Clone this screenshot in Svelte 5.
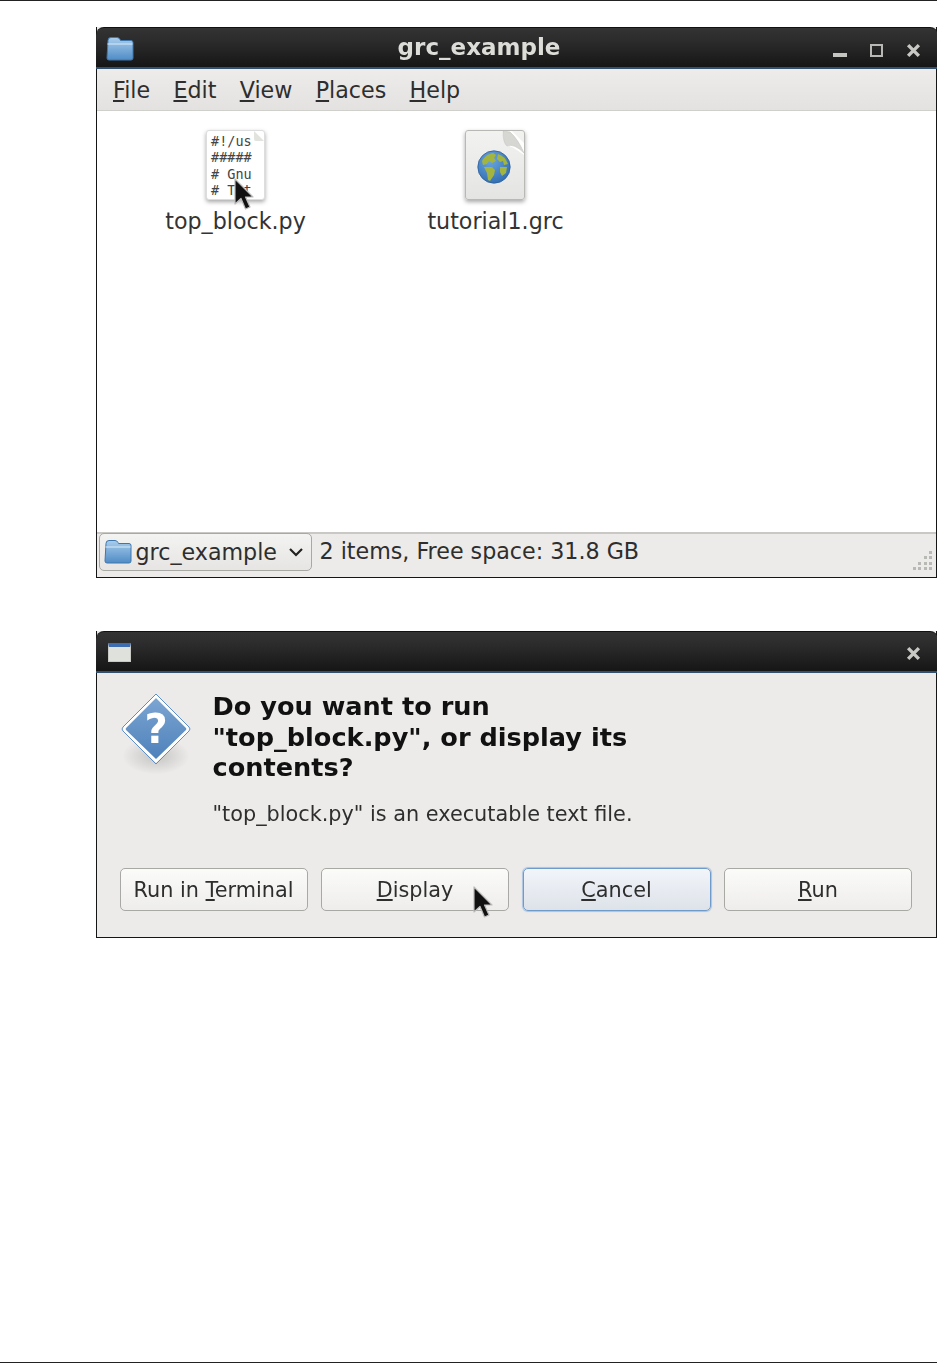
<script>
  const menus = [
    { key: 'F', rest: 'ile' },
    { key: 'E', rest: 'dit' },
    { key: 'V', rest: 'iew' },
    { key: 'P', rest: 'laces' },
    { key: 'H', rest: 'elp' }
  ];

  const scriptLines = ['#!/us', '#####', '# Gnu', '# Tit'];
  const gripRows = [[0,0,0,1],[0,0,1,1],[0,1,1,1],[1,1,1,1]];
</script>

{#snippet folder(w, h)}
  <svg width={w} height={h} viewBox="0 0 28 25" class="folder">
    <defs>
      <linearGradient id="fold" x1="0" y1="0" x2="0" y2="1">
        <stop offset="0" stop-color="#a9cdec" />
        <stop offset="1" stop-color="#4f8cc6" />
      </linearGradient>
    </defs>
    <path d="M2 4.5 Q2 1.5 5 1.5 H11 Q13 1.5 14 3.5 L14.5 4.5 H25 Q27 4.5 27 6.5 V22 Q27 24 25 24 H3 Q1 24 1 22 Z" fill="url(#fold)" stroke="#3f77ad" stroke-width="1" />
    <path d="M1.5 8 H26.5" stroke="#cfe3f5" stroke-width="1.2" />
  </svg>
{/snippet}

{#snippet cursor()}
  <svg width="24" height="34" viewBox="0 0 24 34">
    <path d="M3 1 V26 L9 20.5 L13.5 31 L18 29 L13.5 19 H21 Z" fill="#111" stroke="#bbb" stroke-width="1.2" stroke-linejoin="round" />
  </svg>
{/snippet}

{#snippet closeX(size)}
  <svg width={size} height={size} viewBox="0 0 14 14">
    <path d="M2 2 L12 12 M12 2 L2 12" stroke="#c8c8c4" stroke-width="3.2" />
  </svg>
{/snippet}

<div class="page">
  <div class="rule"></div>

  <section class="window browser">
    <header class="titlebar">
      <span class="title-icon">{@render folder(28, 25)}</span>
      <span class="title">grc_example</span>
      <div class="controls">
        <span class="min"></span>
        <span class="max"></span>
        {@render closeX(15)}
      </div>
    </header>

    <nav class="menubar">
      {#each menus as m}
        <span class="menu"><u>{m.key}</u>{m.rest}</span>
      {/each}
    </nav>

    <div class="files">
      <div class="file">
        <div class="doc script">
          <svg class="ear" width="10" height="10" viewBox="0 0 10 10"><path d="M0 0 L10 10 H2 Q0 10 0 8 Z" fill="#e2e2de" /></svg>
          {#each scriptLines as line}
            <span>{line}</span>
          {/each}
          <span class="pointer">{@render cursor()}</span>
        </div>
        <span class="name">top_block.py</span>
      </div>

      <div class="file">
        <div class="doc grc">
          <svg class="ear" width="22" height="24" viewBox="0 0 22 24"><path d="M0 0 Q2 10 4 14 Q10 15 22 24 V12 L10 0 Z" fill="#fff" /><path d="M1 0 Q1 12 5 15 Q12 12 22 22 Q16 8 8 1 Z" fill="#d6d6d2" stroke="#c4c4c0" stroke-width="0.6" /></svg>
          <svg class="globe" width="34" height="34" viewBox="0 0 34 34">
            <defs>
              <radialGradient id="sea" cx="0.4" cy="0.3" r="0.8">
                <stop offset="0" stop-color="#6ba6de" />
                <stop offset="1" stop-color="#2c68ad" />
              </radialGradient>
            </defs>
            <circle cx="17" cy="17" r="16.2" fill="url(#sea)" stroke="#2f5f9c" stroke-width="0.8" />
            <path d="M5 11 Q9 4 16 3 L19 5 L17 8 L19 11 L15 13 L12 11 L10 14 L6 15 Z" fill="#a3b53e" />
            <path d="M21 4 Q28 6 31 14 L27 15 L26 11 L23 12 L20 9 Z" fill="#a3b53e" />
            <path d="M7 17 L15 17 L18 20 L17 25 L13 31 L11 30 L10 23 Z" fill="#a3b53e" />
            <path d="M23 17 L30 17 L29 23 L25 26 L23 22 Z" fill="#a3b53e" />
          </svg>
        </div>
        <span class="name">tutorial1.grc</span>
      </div>
    </div>

    <footer class="statusbar">
      <div class="path-btn">
        {@render folder(28, 25)}
        <span>grc_example</span>
        <svg width="16" height="10" viewBox="0 0 16 10"><path d="M2 2 L8 8 L14 2" fill="none" stroke="#222" stroke-width="2.2" /></svg>
      </div>
      <span class="status-text">2 items, Free space: 31.8 GB</span>
      <div class="grip">
        {#each gripRows as row}
          {#each row as dot}<i class:on={dot}></i>{/each}
        {/each}
      </div>
    </footer>
  </section>

  <section class="window dialog">
    <header class="titlebar small">
      <span class="app-icon"></span>
      <span class="grow"></span>
      <span class="dialog-close">{@render closeX(15)}</span>
    </header>

    <div class="dialog-body">
      <div class="message">
        <svg class="question" width="72" height="84" viewBox="0 0 72 84">
          <defs>
            <linearGradient id="diamond" x1="0" y1="0" x2="0" y2="1">
              <stop offset="0" stop-color="#7ea6d2" />
              <stop offset="1" stop-color="#4c80ba" />
            </linearGradient>
            <radialGradient id="shade">
              <stop offset="0" stop-color="#c4c4c2" />
              <stop offset="1" stop-color="#ebeae8" />
            </radialGradient>
          </defs>
          <ellipse cx="36" cy="63" rx="33" ry="18" fill="url(#shade)" />
          <path d="M36 3 L67 34 Q69 36 67 38 L36 68 L5 38 Q3 36 5 34 Z" fill="url(#diamond)" stroke="#fff" stroke-width="3" stroke-linejoin="round" />
          <path d="M36 1 L69 34 Q71 36 69 38 L36 71 L3 38 Q1 36 3 34 Z" fill="none" stroke="#5d8fc6" stroke-width="1" />
          <text x="36" y="50" text-anchor="middle" class="qmark">?</text>
        </svg>
        <div class="copy">
          <h2>Do you want to run<br />"top_block.py", or display its<br />contents?</h2>
          <p>"top_block.py" is an executable text file.</p>
        </div>
      </div>

      <div class="buttons">
        <button>Run in <u>T</u>erminal</button>
        <button class="with-pointer"><u>D</u>isplay<span class="pointer2">{@render cursor()}</span></button>
        <button class="focused"><u>C</u>ancel</button>
        <button><u>R</u>un</button>
      </div>
    </div>
  </section>

  <div class="rule bottom"></div>
</div>

<style>
  :global(body) {
    margin: 0;
    background: #fff;
  }

  .page {
    width: 937px;
    height: 1364px;
    display: flex;
    flex-direction: column;
    font-family: "DejaVu Sans", sans-serif;
    font-size: 22.2px;
    color: #2e2e2e;
    overflow: hidden;
  }

  .rule {
    height: 1px;
    background: #222;
    flex: none;
  }

  .rule.bottom {
    margin-top: auto;
    margin-bottom: 1px;
  }

  .window {
    margin-left: 96px;
    width: 841px;
    box-sizing: border-box;
    border: 1.5px solid #151515;
    border-top: none;
    background: #ecebe9;
    display: flex;
    flex-direction: column;
    filter: blur(0.6px);
  }

  .browser {
    margin-top: 26px;
    height: 551px;
  }

  .dialog {
    margin-top: 53px;
    height: 307px;
  }

  .titlebar {
    height: 42px;
    flex: none;
    display: flex;
    align-items: center;
    padding: 0 17px 0 10px;
    position: relative;
    margin: 0 -1.5px;
    background: linear-gradient(#333, #2c2c2c 30%, #141414);
    border-top: 1px solid #111;
    box-sizing: border-box;
    border-radius: 8px 8px 0 0;
    box-shadow: inset 0 -2px 0 #32506f;
  }

  .title {
    position: absolute;
    left: 0;
    right: 0;
    top: 6px;
    text-align: center;
    padding-right: 75px;
    color: #dcdcd8;
    font-weight: bold;
    font-size: 23px;
  }

  .title-icon {
    display: flex;
  }

  .controls {
    margin-left: auto;
    margin-top: 3px;
    display: flex;
    align-items: center;
    gap: 23px;
  }

  .min {
    width: 14px;
    height: 4px;
    background: #c4c4c0;
    margin-top: 10px;
  }

  .max {
    width: 9px;
    height: 9px;
    border: 2.5px solid #b8b8b4;
  }

  .menubar {
    height: 42px;
    flex: none;
    display: flex;
    align-items: center;
    gap: 23.3px;
    padding-left: 16px;
    background: linear-gradient(#edecea, #e3e2e0);
    border-bottom: 1px solid #cfcfcc;
    box-sizing: border-box;
  }

  .files {
    flex: 1;
    background: #fff;
    display: flex;
    padding: 19px 0 0 8.5px;
    align-items: flex-start;
    border-bottom: 2px solid #c9c8c4;
  }

  .file {
    width: 260px;
    display: flex;
    flex-direction: column;
    align-items: center;
    gap: 8px;
  }

  .name {
    line-height: 27px;
    color: #333;
  }

  .doc {
    position: relative;
    box-sizing: border-box;
    border-radius: 3px;
    box-shadow: 0 2px 4px rgba(0, 0, 0, 0.35);
    margin-left: -2px;
  }

  .ear {
    position: absolute;
    top: 0;
    right: 0;
  }

  .script {
    width: 59px;
    height: 70px;
    margin-left: 0;
    background: #fff;
    border: 1px solid #ddd;
    padding: 2px 0 0 4px;
    display: flex;
    flex-direction: column;
    font-family: "DejaVu Sans Mono", monospace;
    font-size: 13.5px;
    line-height: 16.4px;
    color: #444;
    white-space: pre;
  }

  .pointer {
    position: absolute;
    left: 25px;
    top: 47px;
  }

  .grc {
    width: 60px;
    height: 70px;
    background: linear-gradient(#f2f2f0, #e4e4e2);
    border: 1.5px solid #b8b8b4;
  }

  .globe {
    position: absolute;
    left: 11px;
    top: 19px;
  }

  .statusbar {
    height: 43px;
    flex: none;
    display: flex;
    align-items: flex-start;
    padding: 0 4px 0 1.5px;
  }

  .path-btn {
    width: 213px;
    height: 38px;
    margin-top: -1px;
    box-sizing: border-box;
    border: 1px solid #a8a8a4;
    border-radius: 5px;
    display: flex;
    align-items: center;
    gap: 4px;
    padding: 0 7px 1px 4px;
    background: linear-gradient(#f3f3f1, #e6e5e3);
  }

  .path-btn svg:last-child {
    margin-left: auto;
  }

  .status-text {
    margin-left: 8px;
    line-height: 34px;
  }

  .grip {
    margin-left: auto;
    align-self: flex-end;
    margin-bottom: 7px;
    display: grid;
    grid-template-columns: repeat(4, 3px);
    gap: 2.5px;
  }

  .grip i {
    width: 3px;
    height: 3px;
  }

  .grip i.on {
    background: #b8b8b4;
  }

  .titlebar.small {
    padding: 0 17px 0 12px;
  }

  .grow {
    flex: 1;
  }

  .dialog-close {
    display: flex;
    margin-top: 2px;
  }

  .app-icon {
    width: 23px;
    height: 19px;
    box-sizing: border-box;
    border: 1px solid #c8c8c4;
    border-top: 4px solid #3d6cb0;
    background: #dfe2dc;
  }

  .dialog-body {
    flex: 1;
    padding: 18px 0 26px 22.5px;
    display: flex;
    flex-direction: column;
    justify-content: space-between;
  }

  .message {
    display: flex;
    gap: 21px;
  }

  .question {
    flex: none;
    margin-top: 2px;
  }

  .qmark {
    font: bold 40px "DejaVu Sans", sans-serif;
    fill: #fff;
  }

  .copy {
    color: #111;
  }

  h2 {
    margin: 0;
    font-size: 25.6px;
    line-height: 30.5px;
    font-weight: bold;
    color: #111;
  }

  p {
    margin: 17px 0 0;
    font-size: 20.8px;
    line-height: 28px;
    color: #2e2e2e;
  }

  .buttons {
    display: grid;
    grid-template-columns: repeat(4, 188px);
    gap: 13.5px;
  }

  button {
    height: 43px;
    padding: 0;
    font: inherit;
    font-size: 20.8px;
    color: #2e2e2e;
    border: 1.5px solid #a8a8a4;
    border-radius: 5px;
    background: linear-gradient(#fbfbfa, #eeedeb);
    position: relative;
  }

  button.focused {
    background: linear-gradient(#f2f5fa, #dde2e9);
    border-color: #6f9bcb;
    box-shadow: 0 0 1px 1px #a9c4e2;
  }

  .pointer2 {
    position: absolute;
    left: 149px;
    top: 17px;
    display: block;
  }
</style>
